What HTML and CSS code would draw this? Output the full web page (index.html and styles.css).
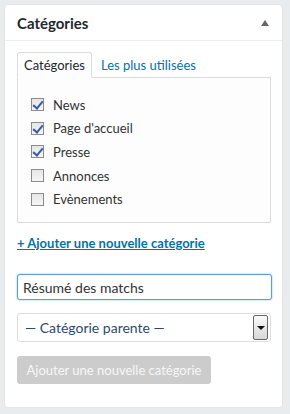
FILE: index.html
```html
<!DOCTYPE html>
<html lang="fr">
<head>
  <meta charset="UTF-8" />
  <title>Catégories</title>
  <link rel="stylesheet" href="styles.css">
</head>
<body>
  <div class="box">
    <div class="box-head">
      <h2>Catégories</h2>
      <span class="toggle"></span>
    </div>

    <div class="box-body">
      <ul class="tabs">
        <li class="tab active">Catégories</li>
        <li class="tab"><a href="#">Les plus utilisées</a></li>
      </ul>

      <div class="panel">
        <label class="cat"><input type="checkbox" checked> News</label>
        <label class="cat"><input type="checkbox" checked> Page d'accueil</label>
        <label class="cat"><input type="checkbox" checked> Presse</label>
        <label class="cat"><input type="checkbox"> Annonces</label>
        <label class="cat"><input type="checkbox"> Evènements</label>
      </div>

      <a href="#" class="add-link">+ Ajouter une nouvelle catégorie</a>

      <div class="field">
        <input type="text" class="text-input" value="Résumé des matchs">
      </div>

      <div class="select">
        <span>— Catégorie parente —</span>
        <span class="select-btn"></span>
      </div>

      <button class="submit" disabled>Ajouter une nouvelle catégorie</button>
    </div>
  </div>
</body>
</html>
```

FILE: styles.css
```css
:root {
  --bg: #e9ecef;
  --border: #dcdcdc;
  --link: #0073aa;
  --text: #32373c;
}

* {
  box-sizing: border-box;
  margin: 0;
  padding: 0;
}

body {
  font-family: Lato, 'Open Sans', sans-serif;
  background: var(--bg);
  color: var(--text);
  padding: 4px 7px 6px 4px;
}

.box {
  background: #fff;
  border: 1px solid #e2e4e7;
  border-radius: 4px;
  height: 404px;
}

.box-head {
  display: flex;
  align-items: center;
  justify-content: space-between;
  height: 36px;
  padding: 0 13px 0 12px;
  border-bottom: 1px solid #eceef0;
}

.box-head h2 {
  font-size: 15px;
  font-weight: 700;
  color: #23282d;
}

.toggle {
  width: 0;
  height: 0;
  border-left: 4px solid transparent;
  border-right: 4px solid transparent;
  border-bottom: 6px solid #666;
}

.box-body {
  padding: 11px 12px 0 12px;
}

.tabs {
  list-style: none;
  display: flex;
  align-items: flex-end;
  height: 25px;
}

.tab {
  font-size: 13px;
  padding: 0 6px;
  line-height: 24px;
}

.tab.active {
  border: 1px solid var(--border);
  border-bottom: 1px solid #fdfdfd;
  border-radius: 3px 3px 0 0;
  background: #fdfdfd;
  margin-bottom: -1px;
  position: relative;
  color: #23282d;
}

.tab a {
  color: var(--link);
  text-decoration: none;
  margin-left: 3px;
}

.panel {
  border: 1px solid var(--border);
  background: #fdfdfd;
  height: 146px;
  width: 254px;
  padding: 15px 12px 0 13px;
}

.cat {
  display: flex;
  align-items: center;
  gap: 9px;
  font-size: 13px;
  height: 23.6px;
  color: #333;
}

.cat input {
  appearance: none;
  -webkit-appearance: none;
  width: 13px;
  height: 13px;
  margin: 0;
  border: 1px solid #8c8c8c;
  background: linear-gradient(#e6e6e6, #f6f6f6);
  position: relative;
}

.cat input:checked::after {
  content: "";
  position: absolute;
  left: 3px;
  top: 0;
  width: 4px;
  height: 8px;
  border-right: 2px solid #3a5aa8;
  border-bottom: 2px solid #3a5aa8;
  transform: rotate(40deg);
}

.add-link {
  display: inline-block;
  margin-top: 12px;
  font-size: 13px;
  font-weight: 700;
  color: var(--link);
  text-decoration: underline;
}

.field {
  margin-top: 23px;
}

.text-input {
  width: 255px;
  height: 26px;
  border: 1px solid #5b9dd9;
  border-radius: 3px;
  box-shadow: 0 0 2px rgba(30, 140, 190, 0.6);
  font-family: inherit;
  font-size: 14px;
  padding: 0 5px;
  color: #333;
  outline: none;
}

.select {
  margin-top: 13px;
  width: 254px;
  height: 29px;
  border: 1px solid #ddd;
  border-radius: 3px;
  display: flex;
  align-items: center;
  justify-content: space-between;
  padding: 0 2px 0 7px;
  font-size: 14px;
  color: #2a4a70;
}

.select-btn {
  width: 15px;
  height: 25px;
  border: 1px solid #666;
  border-radius: 2px;
  background: linear-gradient(#fafafa, #d8d8d8);
  position: relative;
}

.select-btn::after {
  content: "";
  position: absolute;
  left: 3px;
  top: 10px;
  border-left: 4px solid transparent;
  border-right: 4px solid transparent;
  border-top: 4px solid #111;
}

.submit {
  display: block;
  margin-top: 14px;
  width: 194px;
  height: 28px;
  border: none;
  border-radius: 3px;
  background: #cccccc;
  color: #f7f7f7;
  font-family: inherit;
  font-size: 13px;
}
```
